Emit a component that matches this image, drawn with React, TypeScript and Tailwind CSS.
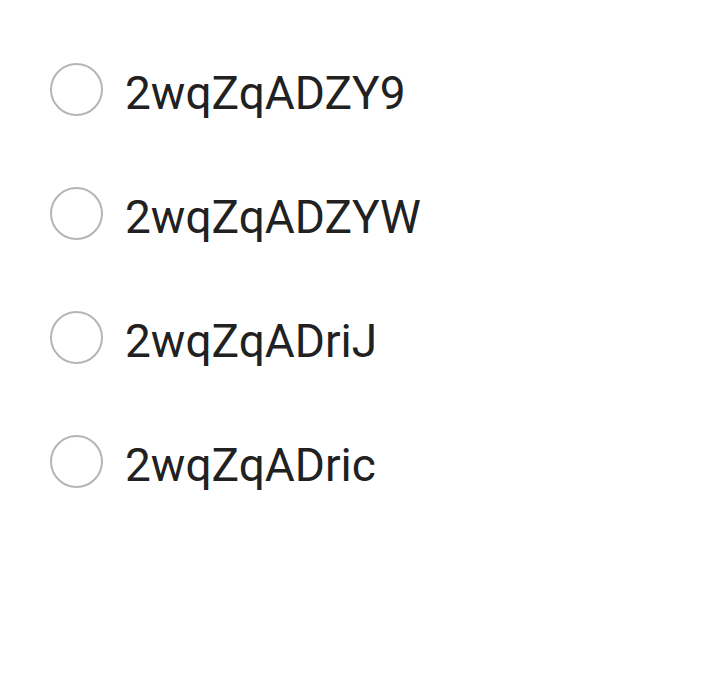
import React from "react";

const items = ["2wqZqADZY9", "2wqZqADZYW", "2wqZqADriJ", "2wqZqADric"];

export default function App() {
  return (
    <div className="w-[720px] h-[698px] bg-white pt-[27px]" style={{ fontFamily: "Roboto, sans-serif" }}>
      {items.map((t) => (
        <div key={t} className="flex items-center h-[124px] pl-[50px]">
          <div className="w-[53px] h-[53px] rounded-full border-[2.5px] border-[#b5b5b5] shrink-0" />
          <span className="ml-[22px] pt-[8px] text-[46px] leading-none text-[#212121]">{t}</span>
        </div>
      ))}
    </div>
  );
}
